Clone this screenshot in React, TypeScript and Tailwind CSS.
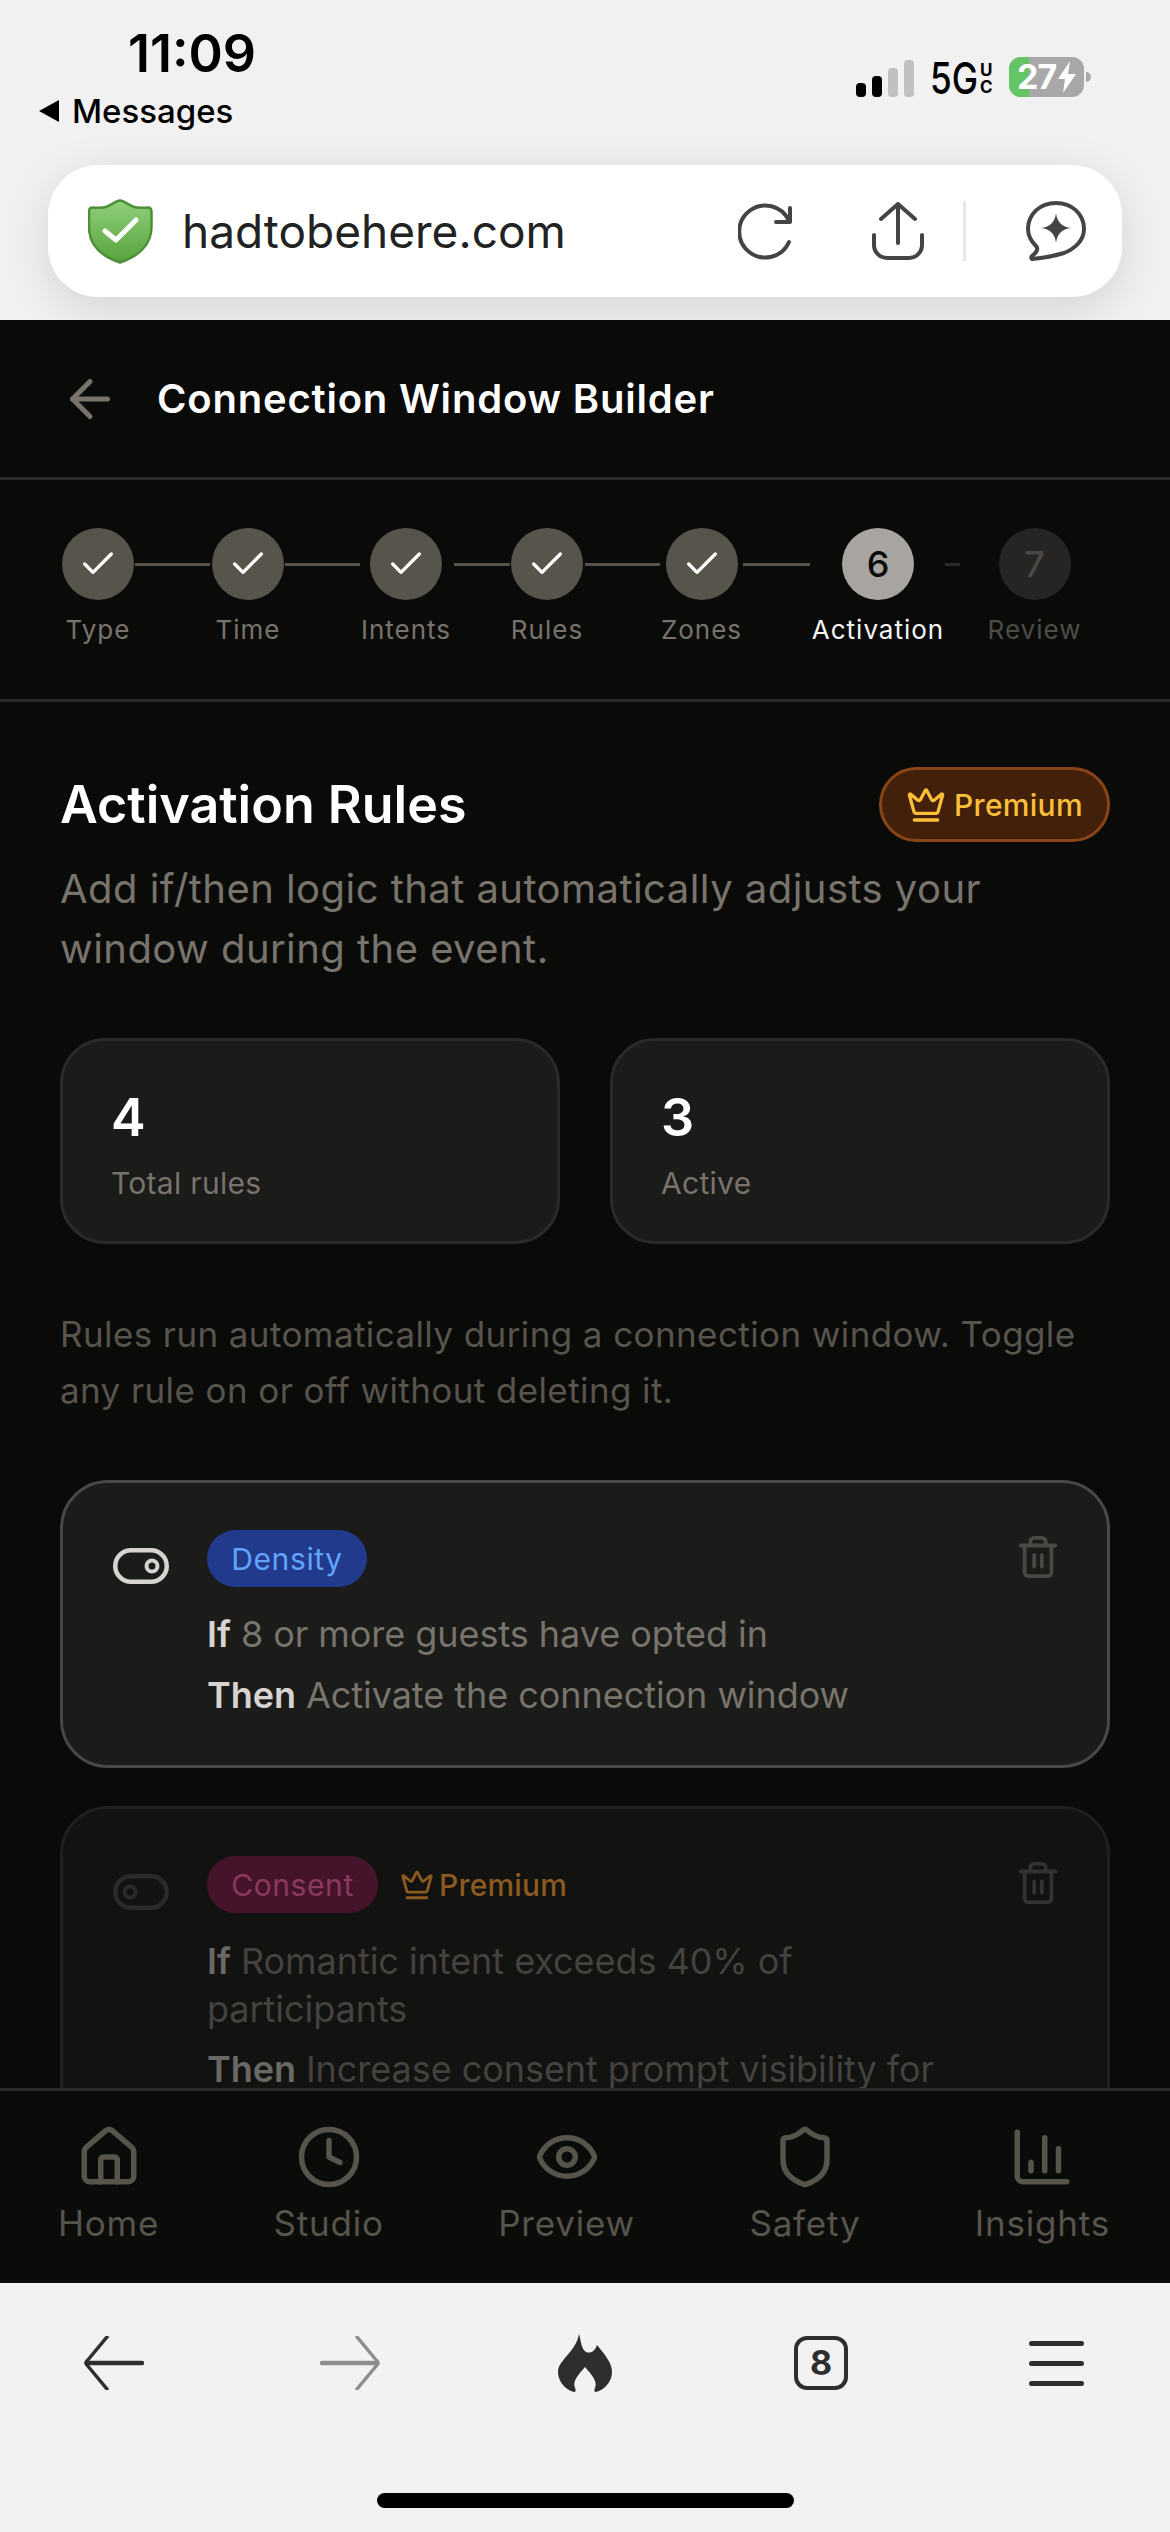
import { ArrowLeft, Check, ChartColumn, Clock, Crown, Eye, House, Shield, Trash2 } from "lucide-react";

const steps = [
  { label: "Type", item: "w-[72px]", state: "done", conn: "w-[75px] ml-[1px] mr-[2px] bg-[#57544c]" },
  { label: "Time", item: "w-[72px]", state: "done", conn: "w-[75px] ml-[1px] mr-[0px] bg-[#57544c]" },
  { label: "Intents", item: "w-[92px]", state: "done", conn: "w-[56px] ml-[2px] mr-[0px] bg-[#57544c]" },
  { label: "Rules", item: "w-[74px]", state: "done", conn: "w-[75px] ml-[1px] mr-[1px] bg-[#57544c]" },
  { label: "Zones", item: "w-[81px]", state: "done", conn: "w-[67px] ml-[1px] mr-[1px] bg-[#57544c]" },
  { label: "Activation", item: "w-[134px]", state: "active", conn: "w-[15px] ml-[0px] mr-[28px] bg-[#2a2a28]" },
  { label: "Review", item: "w-[93px]", state: "todo", conn: "" },
];

const nav = [
  { label: "Home", Icon: House },
  { label: "Studio", Icon: Clock },
  { label: "Preview", Icon: Eye },
  { label: "Safety", Icon: Shield },
  { label: "Insights", Icon: ChartColumn },
];

function Toggle({ on, color, className }: { on: boolean; color: string; className: string }) {
  return (
    <svg className={className} width="56" height="36" viewBox="0 0 56 36" fill="none" stroke={color} strokeWidth="4.500">
      <rect x="2.250" y="2.250" width="51.500" height="31.500" rx="15.750" />
      <circle cx={on ? 39 : 17} cy="18" r="5.500" strokeWidth="4" />
    </svg>
  );
}

function StatusBar() {
  return (
    <div className="flex h-[165px] justify-between">
      <div className="pl-[38px] pt-[28px]">
        <div className="pl-[90px] text-[52px] font-semibold leading-[52px] text-black">11:09</div>
        <div className="mt-[11px] flex h-[40px] items-center gap-[12px]">
          <svg width="22" height="24" viewBox="0 0 22 24"><path d="M21 1v22L1 12z" fill="#000" /></svg>
          <span className="text-[33px] font-medium leading-[40px] text-black">Messages</span>
        </div>
      </div>
      <div className="flex h-[97px] items-end pr-[79px] pt-[57px]">
        <div className="flex items-end gap-[6px]">
          <div className="h-[14px] w-[10px] rounded-[4px] bg-black" />
          <div className="h-[21px] w-[10px] rounded-[4px] bg-black" />
          <div className="h-[29px] w-[10px] rounded-[4px] bg-[#c0c0c0]" />
          <div className="h-[37px] w-[10px] rounded-[4px] bg-[#c0c0c0]" />
        </div>
        <div className="ml-[16px] flex h-[40px] w-[63px] items-end">
          <span className="w-[45px] origin-left scale-x-[0.8] text-[44px] font-medium leading-[38px] whitespace-nowrap text-black">5G</span>
          <div className="ml-[5px] flex flex-col items-center pb-[1px] text-[17px] font-bold leading-[17px] text-black">
            <span>U</span>
            <span>C</span>
          </div>
        </div>
        <div className="relative ml-[16px] h-[40px] w-[75px] overflow-hidden rounded-[12px] bg-[#a8a8a8]">
          <div className="h-full w-[20px] bg-[#65c466]" />
          <div className="absolute inset-0 flex items-center pl-[8px]">
            <span className="text-[34px] font-bold leading-[40px] tracking-[-1px] text-white">27</span>
            <svg className="ml-[1px]" width="20" height="32" viewBox="0 0 20 32"><path d="M13 0 1 18h7l-2 14L19 13h-8z" fill="#fff" /></svg>
          </div>
        </div>
        <div className="mb-[15px] ml-[2px] h-[10px] w-[5px] rounded-r-[5px] bg-[#a8a8a8]" />
      </div>
    </div>
  );
}

function UrlBar() {
  return (
    <div className="ml-[48px] flex h-[132px] w-[1074px] items-center rounded-[50px] bg-white pl-[40px] shadow-[0_12px_48px_rgba(0,0,0,0.12)]">
      <svg width="65" height="65" viewBox="0 0 65 65">
        <defs>
          <linearGradient id="sg" x1="0" y1="0" x2="0" y2="1">
            <stop offset="0" stopColor="#8fd07c" />
            <stop offset="1" stopColor="#58a23c" />
          </linearGradient>
        </defs>
        <path d="M32 1.500C36 1.500 40 6 46 8C51 9.500 56 8.500 60 8.500C62 8.500 63.500 10 63.500 13L63.500 28C63.500 46 50 57.500 32 63.500C14 57.500 1 46 1 28L1 13C1 10 2.500 8.500 4.500 8.500C8 8.500 13 9.500 18 8C24 6 28 1.500 32 1.500Z" fill="url(#sg)" stroke="#4c8f37" strokeWidth="2.500" />
        <path d="M17 32l11 9 20-20" fill="none" stroke="#fff" strokeWidth="5" strokeLinecap="round" strokeLinejoin="round" />
      </svg>
      <span className="ml-[29px] w-[556px] text-[46px] leading-[60px] text-[#222222]">hadtobehere.com</span>
      <svg width="56" height="58" viewBox="0 0 56 58" fill="none" stroke="#444444" strokeWidth="4" strokeLinecap="round" strokeLinejoin="round">
        <path d="M51 19A26 26 0 1 0 51 40" />
        <path d="M52 6V20H38" />
      </svg>
      <svg className="ml-[78px]" width="52" height="58" viewBox="0 0 52 58" fill="none" stroke="#444444" strokeWidth="4" strokeLinecap="round" strokeLinejoin="round">
        <path d="M26 41V2M9 17 26 2 43 17" />
        <path d="M2 33V43A13 13 0 0 0 15 56H37A13 13 0 0 0 50 43V33" />
      </svg>
      <div className="ml-[39px] h-[60px] w-[3px] bg-[#e8e8e8]" />
      <svg className="ml-[60px]" width="60" height="60" viewBox="0 0 60 60" fill="none" stroke="#444444" strokeWidth="4" strokeLinejoin="round">
        <path d="M10 45C4 39 2 33 2 28C2 13 14 2 30 2C46 2 58 13 58 28C58 40 48 48 38 52C28 55 16 57 6 58C5 57.500 5 56 6 55C10 52 13 48 10 45Z" />
        <path d="M30 12C31 21 36 26 45 27C36 28 31 33 30 42C29 33 24 28 15 27C24 26 29 21 30 12Z" fill="#444444" stroke="none" />
      </svg>
    </div>
  );
}

function Stepper() {
  return (
    <div className="h-[222px] border-b-[3px] border-[#2a2a28] pl-[62px] pt-[48px]">
      <div className="flex items-start">
        {steps.map((s) => (
          <div key={s.label} className="flex items-start">
            <div className={`flex flex-col items-center ${s.item}`}>
              {s.state === "done" && (
                <div className="flex h-[72px] w-[72px] items-center justify-center rounded-full bg-[#57544c]">
                  <Check size={40} color="#ffffff" />
                </div>
              )}
              {s.state === "active" && (
                <div className="flex h-[72px] w-[72px] items-center justify-center rounded-full bg-[#a8a5a0] text-[36px] font-medium text-[#0a0a09]">6</div>
              )}
              {s.state === "todo" && (
                <div className="flex h-[72px] w-[72px] items-center justify-center rounded-full bg-[#262523] text-[36px] font-medium text-[#4a4844]">7</div>
              )}
              <span
                className={
                  s.state === "active"
                    ? "mt-[14px] text-[26px] leading-[32px] tracking-[1px] whitespace-nowrap text-[#f5f5f4]"
                    : s.state === "todo"
                      ? "mt-[14px] text-[26px] leading-[32px] tracking-[1px] whitespace-nowrap text-[#4f4c47]"
                      : "mt-[14px] text-[26px] leading-[32px] tracking-[1px] whitespace-nowrap text-[#78746c]"
                }
              >
                {s.label}
              </span>
            </div>
            {s.conn && <div className={`mt-[35px] h-[3px] ${s.conn}`} />}
          </div>
        ))}
      </div>
    </div>
  );
}

function Stat({ n, label }: { n: string; label: string }) {
  return (
    <div className="h-[206px] rounded-[45px] border-[3px] border-[#2a2a28] bg-[#1b1b19] pl-[48px] pt-[47px]">
      <div className="text-[52px] font-semibold leading-[60px] text-white">{n}</div>
      <div className="mt-[15px] text-[30px] leading-[40px] tracking-[0.3px] text-[#78746c]">{label}</div>
    </div>
  );
}

export default function App() {
  return (
    <div className="flex h-[2532px] w-[1170px] flex-col overflow-hidden bg-[#0a0a09] font-['Inter',sans-serif]">
      <div className="h-[320px] bg-[#f1f1f1]">
        <StatusBar />
        <UrlBar />
      </div>
      <div className="flex h-[160px] items-center border-b-[3px] border-[#2a2a28] bg-[#0a0a09] pl-[60px]">
        <ArrowLeft size={60} color="#78746c" />
        <span className="ml-[37px] text-[40px] font-semibold leading-[50px] tracking-[0.8px] text-white">Connection Window Builder</span>
      </div>
      <Stepper />
      <div className="flex-1 overflow-hidden px-[60px]">
        <div className="mt-[65px] flex h-[75px] items-center justify-between">
          <span className="text-[52px] font-semibold leading-[60px] text-white">Activation Rules</span>
          <div className="flex h-[75px] w-[231px] items-center rounded-full border-[3px] border-[#8a4516] bg-[#42200a] pl-[24px]">
            <Crown size={40} color="#fbbf38" />
            <span className="ml-[8px] text-[30px] font-medium leading-[40px] tracking-[0.3px] text-[#fbbf38]">Premium</span>
          </div>
        </div>
        <p className="mt-[17px] text-[40px] leading-[60px] tracking-[0.45px] text-[#78746c]">Add if/then logic that automatically adjusts your window during the event.</p>
        <div className="mt-[59px] grid grid-cols-2 gap-[50px]">
          <Stat n="4" label="Total rules" />
          <Stat n="3" label="Active" />
        </div>
        <p className="mt-[62px] text-[35px] leading-[56px] tracking-[0.4px] text-[#57544c]">Rules run automatically during a connection window. Toggle any rule on or off without deleting it.</p>

        <div className="mt-[62px] flex h-[288px] rounded-[48px] border-[3px] border-[#4a4844] bg-[#1b1b19] pl-[50px] pr-[46px] pt-[47px]">
          <Toggle on color="#d6d3d1" className="mt-[18px] shrink-0" />
          <div className="ml-[38px] flex-1">
            <div className="flex h-[57px] w-[160px] items-center justify-center rounded-full bg-[#223a8c] text-[30px] leading-[40px] tracking-[0.6px] text-[#60a5fa]">Density</div>
            <div className="mt-[23px] text-[36px] leading-[48px] tracking-[-0.05px] text-[#78746c]"><span className="font-semibold text-[#d6d3d1]">If</span> 8 or more guests have opted in</div>
            <div className="mt-[13px] text-[36px] leading-[48px] tracking-[-0.05px] text-[#78746c]"><span className="font-semibold text-[#d6d3d1]">Then</span> Activate the connection window</div>
          </div>
          <Trash2 size={46} color="#4a4844" className="mt-[4px] shrink-0" />
        </div>

        <div className="mt-[38px] flex h-[400px] rounded-[48px] border-[3px] border-[#1f1f1d] bg-[#121211] pl-[50px] pr-[46px] pt-[47px]">
          <Toggle on={false} color="#2a2a28" className="mt-[18px] shrink-0" />
          <div className="ml-[38px] flex-1">
            <div className="flex items-center">
              <div className="flex h-[57px] w-[171px] items-center justify-center rounded-full bg-[#45142a] text-[30px] leading-[40px] tracking-[0.6px] text-[#8a3a5e]">Consent</div>
              <Crown size={34} color="#8a5a1e" className="ml-[22px]" />
              <span className="ml-[5px] text-[30px] font-medium leading-[40px] tracking-[0.2px] text-[#8a5a1e]">Premium</span>
            </div>
            <div className="mt-[24px] w-[780px] text-[36px] leading-[48px] tracking-[-0.05px] text-[#44423e]"><span className="font-semibold text-[#6a6864]">If</span> Romantic intent exceeds 40% of participants</div>
            <div className="mt-[12px] w-[780px] text-[36px] leading-[48px] tracking-[-0.05px] text-[#44423e]"><span className="font-semibold text-[#6a6864]">Then</span> Increase consent prompt visibility for everyone</div>
          </div>
          <Trash2 size={46} color="#333230" className="mt-[4px] shrink-0" />
        </div>
      </div>
      <div className="flex h-[195px] justify-between border-t-[3px] border-[#2a2a28] bg-[#0b0b0a] pl-[58px] pr-[60px] pt-[33px]">
        {nav.map(({ label, Icon }) => (
          <div key={label} className="flex flex-col items-center">
            <Icon size={66} color="#57544c" />
            <span className="mt-[11px] text-[35px] leading-[44px] tracking-[0.8px] text-[#57544c]">{label}</span>
          </div>
        ))}
      </div>
      <div className="h-[249px] bg-[#f2f2f2] pl-[84px] pt-[51px]">
        <div className="flex h-[58px] items-center">
          <svg width="60" height="54" viewBox="0 0 60 54" fill="none" stroke="#2e2e2e" strokeLinecap="round" strokeLinejoin="round">
            <path d="M23 1 3 25Q1 27 3 29L23 53" strokeWidth="3.500" />
            <path d="M3 27H58" strokeWidth="4.500" />
          </svg>
          <svg className="ml-[176px]" width="60" height="54" viewBox="0 0 60 54" fill="none" stroke="#8e8e8e" strokeLinecap="round" strokeLinejoin="round">
            <path d="M37 1 57 25Q59 27 57 29L37 53" strokeWidth="3.500" />
            <path d="M2 27H57" strokeWidth="4.500" />
          </svg>
          <svg className="ml-[178px]" width="54" height="58" viewBox="0 0 54 58">
            <path d="M21 0C23 6 23 15 28 18C33 20 37 17 39 11C46 20 54 28 54 38C54 48 46 56 38 58C36 58 36 56 37 54C40 47 33 40 27 33C21 40 14 47 17 54C18 56 18 58 16 58C8 56 0 48 0 38C0 26 18 18 21 0Z" fill="#2e2e2e" />
          </svg>
          <div className="ml-[182px] flex h-[54px] w-[54px] items-center justify-center rounded-[13px] border-[4px] border-[#2e2e2e] text-[34px] font-bold leading-[40px] text-[#2e2e2e]">8</div>
          <div className="ml-[181px] flex w-[55px] flex-col gap-[15px]">
            <div className="h-[5px] rounded-full bg-[#2e2e2e]" />
            <div className="h-[5px] rounded-full bg-[#2e2e2e]" />
            <div className="h-[5px] rounded-full bg-[#2e2e2e]" />
          </div>
        </div>
        <div className="ml-[293px] mt-[101px] h-[15px] w-[417px] rounded-full bg-black" />
      </div>
    </div>
  );
}
